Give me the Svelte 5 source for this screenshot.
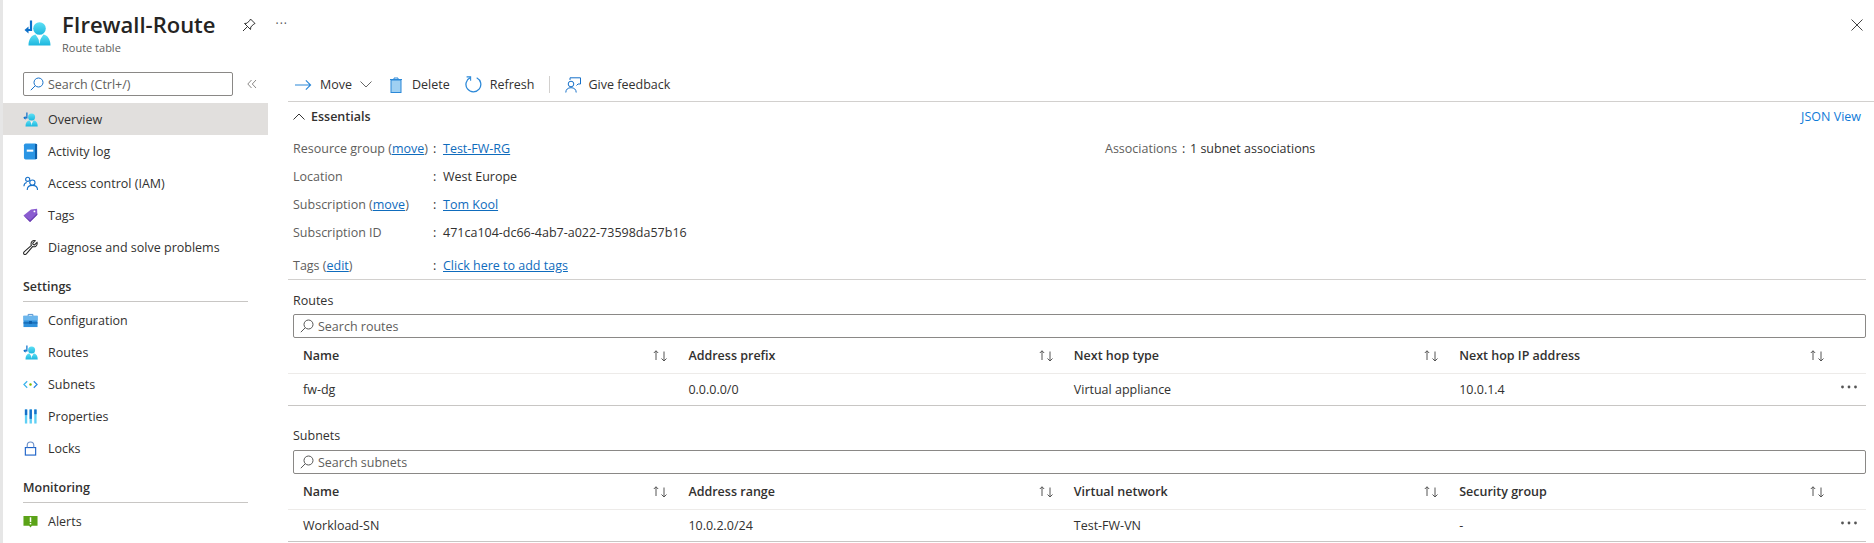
<script>
  const navGroups = [
    { items: [
      { label: 'Overview', icon: 'route', active: true },
      { label: 'Activity log', icon: 'log' },
      { label: 'Access control (IAM)', icon: 'iam' },
      { label: 'Tags', icon: 'tag' },
      { label: 'Diagnose and solve problems', icon: 'wrench' }
    ] },
    { title: 'Settings', items: [
      { label: 'Configuration', icon: 'config' },
      { label: 'Routes', icon: 'route' },
      { label: 'Subnets', icon: 'subnet' },
      { label: 'Properties', icon: 'props' },
      { label: 'Locks', icon: 'lock' }
    ] },
    { title: 'Monitoring', items: [{ label: 'Alerts', icon: 'alert' }] }
  ];

  const tables = [
    { title: 'Routes', search: 'Search routes',
      cols: ['Name', 'Address prefix', 'Next hop type', 'Next hop IP address'],
      row: ['fw-dg', '0.0.0.0/0', 'Virtual appliance', '10.0.1.4'] },
    { title: 'Subnets', search: 'Search subnets',
      cols: ['Name', 'Address range', 'Virtual network', 'Security group'],
      row: ['Workload-SN', '10.0.2.0/24', 'Test-FW-VN', '-'] }
  ];
</script>

{#snippet routeIcon()}
  <svg class="fill" viewBox="0 0 27 26">
    <defs>
      <linearGradient id="cyan" x1="0" y1="0" x2="0" y2="1">
        <stop offset="0" stop-color="#5ee0f5" />
        <stop offset="1" stop-color="#1cb6de" />
      </linearGradient>
    </defs>
    <circle cx="15.5" cy="8.5" r="6.3" fill="url(#cyan)" />
    <path d="M4.5 25.5C4.5 19.5 7 15.5 11.5 14.5L15.5 20.5 19.5 14.5C24 15.5 26.5 19.5 26.5 25.5Z" fill="url(#cyan)" />
    <path d="M13.5 16.5h4l-1 2-.7 5h-.6l-.7-5z" fill="#fff" opacity=".8" />
    <path d="M7 0.5V10H2.5" fill="none" stroke="#0b6fc9" stroke-width="2.2" />
    <path d="M4.5 6.5L.5 10l4 3.5z" fill="#0b6fc9" />
  </svg>
{/snippet}

{#snippet navIcon(name)}
  {#if name === 'route'}
    {@render routeIcon()}
  {:else if name === 'log'}
    <svg class="tall" viewBox="0 0 16 18">
      <rect x="1" y="0.500" width="14" height="17" rx="1.800" fill="#2a95e4" />
      <rect x="12.800" y="1" width="2.200" height="16" fill="#0f5fa8" />
      <rect x="4" y="7" width="7" height="2.200" fill="#fff" />
    </svg>
  {:else if name === 'iam'}
    <svg viewBox="0 0 16 16" fill="none" stroke="#1670c9" stroke-width="1.2">
      <circle cx="5" cy="3.5" r="2.2" />
      <circle cx="10" cy="7" r="2.8" />
      <path d="M1 11c0-2 1-3.500 3-4M4.500 15c0-3 2.200-5 5.500-5s5.500 2 5.500 5" />
    </svg>
  {:else if name === 'tag'}
    <svg viewBox="0 0 16 16">
      <path d="M.5 8L8.500 1.500 15 .8l.3 6.400L7.500 14.800z" fill="#8a5cd0" />
      <path d="M.5 8l7 6.800 7.800-7.600-.2-1.500-7.600 7.300z" fill="#6b3fb0" />
      <circle cx="12.200" cy="3.600" r="1" fill="#fff" />
    </svg>
  {:else if name === 'wrench'}
    <svg viewBox="0 0 16 16" fill="none" stroke="#222" stroke-width="1.100">
      <path d="M15 2.600L12.300 5.200 10.800 4.800 10.400 3.300 13 .8C10.800 0 8.400 1.600 8.600 4.400 8.600 5 8.800 5.400 9 5.800L1.200 12.600C.2 13.600.6 15 1.600 15.400 2.400 15.600 3 15.400 3.600 14.800L10.200 7C12.800 8 15.800 6 15 2.600Z" />
    </svg>
  {:else if name === 'config'}
    <svg viewBox="0 0 16 16">
      <path d="M5.500 3.500V1.500h5v2" fill="none" stroke="#4a8fd0" stroke-width="1" />
      <rect x="0.500" y="3" width="15" height="12" fill="#2e90dc" />
      <rect x="0.500" y="3" width="15" height="5" fill="#6bb6ec" />
      <rect x="0.500" y="10" width="15" height="1.200" fill="#0f5fa8" />
      <rect x="6.500" y="8.500" width="3" height="3" fill="#0f5fa8" />
    </svg>
  {:else if name === 'subnet'}
    <svg viewBox="0 0 16 16" fill="none" stroke-width="1.300">
      <path d="M4.500 4.500L1 8l3.500 3.500" stroke="#3bb4ec" />
      <path d="M11.500 4.500L15 8l-3.500 3.500" stroke="#2a8ae0" />
      <circle cx="8" cy="8" r="1.300" fill="#7fba00" stroke="none" />
    </svg>
  {:else if name === 'props'}
    <svg viewBox="0 0 16 16">
      <rect x="2" y="0.500" width="2.500" height="15" fill="#5fd0f5" />
      <rect x="2" y="0.500" width="2.500" height="6" fill="#1670c9" />
      <rect x="7" y="0.500" width="2.500" height="15" fill="#5fd0f5" />
      <rect x="7" y="0.500" width="2.500" height="10" fill="#1670c9" />
      <rect x="12" y="0.500" width="2.500" height="15" fill="#5fd0f5" />
      <rect x="12" y="0.500" width="2.500" height="5" fill="#1670c9" />
    </svg>
  {:else if name === 'lock'}
    <svg viewBox="0 0 16 16" fill="none" stroke="#1c62c8" stroke-width="1.2">
      <rect x="2.500" y="7" width="11" height="8" />
      <path d="M4.500 7V4.500a3.500 3.500 0 0 1 7 0V7" stroke="#6a8fc8" />
    </svg>
  {:else if name === 'alert'}
    <svg viewBox="0 0 16 16">
      <path d="M0.500 2h15v10.500h-6L8 14.500 6.500 12.500h-6z" fill="#5ba318" />
      <rect x="7.200" y="3.500" width="1.600" height="5" fill="#fff" />
      <rect x="7.200" y="9.500" width="1.600" height="1.600" fill="#fff" />
    </svg>
  {/if}
{/snippet}

{#snippet searchGlyph()}
  <svg class="glass" viewBox="0 0 14 14" fill="none" stroke-width="1">
    <circle cx="8.500" cy="5.500" r="4.500" />
    <path d="M5.300 8.700L.8 13.200" />
  </svg>
{/snippet}

{#snippet sortGlyph()}
  <svg class="sort" viewBox="0 0 16 12" fill="none" stroke="#555" stroke-width="1">
    <path d="M4 10V.8M1.800 3L4 .8 6.200 3M12 1.500v9.500M9.500 8.500L12 11l2.500-2.500" />
  </svg>
{/snippet}

{#snippet dotsGlyph()}
  <svg class="dots-icon" viewBox="0 0 16 4" fill="#555">
    <circle cx="1.500" cy="2" r="1.400" />
    <circle cx="8" cy="2" r="1.400" />
    <circle cx="14.500" cy="2" r="1.400" />
  </svg>
{/snippet}

<div class="blade">
  <header class="title-bar">
    <div class="big-icon">{@render routeIcon()}</div>
    <div class="title-text">
      <h1>FIrewall-Route</h1>
      <div class="subtitle">Route table</div>
    </div>
    <svg class="pin" viewBox="0 0 14 14" fill="none" stroke="#333" stroke-width="1">
      <path d="M8.500 1L13 5.500 11.800 6 8.800 9 8.500 11.500 2.500 5.500 5 5.200 8 2.200zM5.500 8.500L1 13" />
    </svg>
    <span class="more">···</span>
    <svg class="close" viewBox="0 0 12 12" stroke="#444" stroke-width="1">
      <path d="M.5.5l11 11M11.500.5l-11 11" />
    </svg>
  </header>

  <div class="columns">
    <nav class="sidebar">
      <div class="side-search-row">
        <div class="side-search">
          <span class="side-glass">{@render searchGlyph()}</span>
          <span>Search (Ctrl+/)</span>
        </div>
        <svg class="collapse" viewBox="0 0 10 10" fill="none" stroke="#8a8886" stroke-width="1">
          <path d="M4.500 1L.8 5l3.700 4M9 1L5.300 5 9 9" />
        </svg>
      </div>
      {#each navGroups as group}
        {#if group.title}
          <div class="nav-title">{group.title}</div>
        {/if}
        {#each group.items as item}
          <div class="nav-item" class:active={item.active}>
            <span class="nav-icon">{@render navIcon(item.icon)}</span>
            <span>{item.label}</span>
          </div>
        {/each}
      {/each}
    </nav>

    <main class="content">
      <div class="toolbar">
        <span class="tool">
          <svg class="tool-icon arrow" viewBox="0 0 18 12" fill="none" stroke="#2b88d8" stroke-width="1.200">
            <path d="M0 6h16.500M11.500 1l5 5-5 5" />
          </svg>
          Move
          <svg class="chevron" viewBox="0 0 12 7" fill="none" stroke="#666" stroke-width="1">
            <path d="M.5.5L6 6 11.500.5" />
          </svg>
        </span>
        <span class="tool">
          <svg class="tool-icon trash" viewBox="0 0 14 16">
            <path d="M1 2.500h12M5 2.500V1h4v1.500" fill="none" stroke="#2b88d8" />
            <rect x="2" y="3" width="10" height="12.500" fill="#9fd0f2" stroke="#2b88d8" />
          </svg>
          Delete
        </span>
        <span class="tool">
          <svg class="tool-icon refresh" viewBox="0 0 16 16" fill="none" stroke="#2b88d8" stroke-width="1.200">
            <path d="M5 1.500A7 7 0 1 0 11 1.600" />
            <path d="M1.500 .8H5.300V4.500" stroke-width="1" />
          </svg>
          Refresh
        </span>
        <span class="tool-sep"></span>
        <span class="tool">
          <svg class="tool-icon feedback" viewBox="0 0 16 16" fill="none" stroke="#1670c9" stroke-width="1">
            <path d="M5 3V.8h10.500V7H13l-1.500 1.500" />
            <circle cx="6" cy="7" r="2.800" />
            <path d="M.8 15.500c0-3 2-4.800 5.200-4.800s5.200 1.800 5.200 4.800" />
          </svg>
          Give feedback
        </span>
      </div>

      <div class="essentials-head">
        <span class="essentials-title">
          <svg class="chevron-up" viewBox="0 0 12 7" fill="none" stroke="#333" stroke-width="1">
            <path d="M.5 6.500L6 1l5.500 5.500" />
          </svg>
          Essentials
        </span>
        <a class="json" href="#top">JSON View</a>
      </div>

      <div class="essentials">
        <div class="ess-col">
          <div class="kv"><span class="k">Resource group (<a href="#top">move</a>)</span><span class="colon">:</span><a href="#top">Test-FW-RG</a></div>
          <div class="kv"><span class="k">Location</span><span class="colon">:</span><span>West Europe</span></div>
          <div class="kv"><span class="k">Subscription (<a href="#top">move</a>)</span><span class="colon">:</span><a href="#top">Tom Kool</a></div>
          <div class="kv"><span class="k">Subscription ID</span><span class="colon">:</span><span>471ca104-dc66-4ab7-a022-73598da57b16</span></div>
        </div>
        <div class="ess-col">
          <div class="kv assoc"><span class="k">Associations</span><span class="colon">:</span><span>1 subnet associations</span></div>
        </div>
      </div>
      <div class="kv tags-row"><span class="k">Tags (<a href="#top">edit</a>)</span><span class="colon">:</span><a href="#top">Click here to add tags</a></div>

      {#each tables as table}
        <section class="table-block">
          <div class="table-title">{table.title}</div>
          <div class="table-search">
            <span class="table-glass">{@render searchGlyph()}</span>
            <span>{table.search}</span>
          </div>
          <div class="grid-row head">
            {#each table.cols as col}
              <div class="cell">
                <span>{col}</span>
                {@render sortGlyph()}
              </div>
            {/each}
            <div></div>
          </div>
          <div class="grid-row body">
            {#each table.row as value}
              <div class="cell">{value}</div>
            {/each}
            <div class="dots">{@render dotsGlyph()}</div>
          </div>
        </section>
      {/each}
    </main>
  </div>
</div>

<style>
  :global(body) {
    margin: 0;
    background: #fff;
    overflow: hidden;
  }

  .blade {
    width: 1874px;
    height: 543px;
    overflow: hidden;
    font-family: 'Open Sans', 'Noto Sans', sans-serif;
    font-size: 12.5px;
    color: #323130;
    box-sizing: border-box;
    border-left: 3px solid #e6e6e6;
  }

  a {
    color: #0f6cbd;
    text-decoration: underline;
  }

  .title-bar {
    display: flex;
    align-items: flex-start;
    height: 72px;
    position: relative;
  }

  .big-icon {
    width: 27px;
    height: 26px;
    margin: 20px 11px 0 21px;
  }

  .big-icon svg,
  .nav-icon svg {
    display: block;
    width: 100%;
    height: 100%;
  }

  .nav-icon svg.tall {
    height: 17px;
    margin-top: -1px;
  }

  h1 {
    margin: 0;
    padding-top: 9px;
    font-size: 22px;
    line-height: 30px;
    font-weight: 600;
    color: #252423;
  }

  .subtitle {
    font-size: 11px;
    line-height: 14px;
    color: #605e5c;
    margin-top: 2px;
  }

  .pin {
    width: 14px;
    height: 14px;
    margin: 18px 0 0 27px;
  }

  .more {
    margin: 15px 0 0 19px;
    font-size: 12px;
    letter-spacing: 1px;
    color: #555;
  }

  .close {
    width: 12px;
    height: 12px;
    position: absolute;
    right: 11px;
    top: 19px;
  }

  .columns {
    display: flex;
  }

  .sidebar {
    width: 265px;
    flex: none;
  }

  .side-search-row {
    display: flex;
    align-items: center;
    height: 24px;
    padding-left: 20px;
    margin-bottom: 7px;
  }

  .side-search {
    display: flex;
    align-items: center;
    box-sizing: border-box;
    width: 210px;
    height: 24px;
    border: 1px solid #8a8886;
    border-radius: 2px;
    padding-left: 6px;
    color: #605e5c;
  }

  .side-glass {
    stroke: #1670c9;
    display: flex;
    margin-right: 4px;
  }

  .glass {
    width: 14px;
    height: 14px;
  }

  .collapse {
    width: 10px;
    height: 10px;
    margin-left: 14px;
  }

  .nav-item {
    display: flex;
    align-items: center;
    height: 32px;
    padding-left: 20px;
  }

  .nav-item.active {
    background: #e1dfdd;
  }

  .nav-icon {
    width: 15px;
    height: 15px;
    margin-right: 10px;
    display: block;
  }

  .nav-title {
    margin: 15px 20px 2px 20px;
    padding-bottom: 5px;
    border-bottom: 1px solid #c8c6c4;
    font-weight: 600;
    line-height: 18px;
    height: 18px;
  }

  .content {
    flex: 1;
    margin-left: 20px;
    min-width: 0;
  }

  .toolbar {
    display: flex;
    align-items: center;
    box-sizing: border-box;
    height: 30px;
    padding: 0 0 4px 7px;
    border-bottom: 1px solid #d2d0ce;
  }

  .tool {
    display: flex;
    align-items: center;
    margin-right: 15px;
  }

  .tool-icon {
    margin-right: 8px;
    flex: none;
  }

  .arrow {
    width: 17px;
    height: 12px;
  }

  .trash {
    width: 14px;
    height: 16px;
    margin-right: 9px;
  }

  .refresh {
    width: 17px;
    height: 17px;
  }

  .feedback {
    width: 16px;
    height: 16px;
    margin-right: 7px;
  }

  .chevron {
    width: 12px;
    height: 7px;
    margin-left: 8px;
    margin-right: 2px;
  }

  .tool-sep {
    width: 1px;
    height: 17px;
    background: #d2d0ce;
    margin: 0 15px 0 0;
  }

  .essentials-head {
    display: flex;
    justify-content: space-between;
    align-items: center;
    height: 28px;
    padding: 0 13px 0 5px;
  }

  .essentials-title {
    display: flex;
    align-items: center;
    font-weight: 600;
  }

  .chevron-up {
    width: 12px;
    height: 7px;
    margin-right: 6px;
  }

  .json {
    color: #0f7ad8;
    text-decoration: none;
  }

  .essentials {
    display: flex;
    padding-left: 5px;
    padding-top: 4px;
  }

  .ess-col {
    width: 812px;
    flex: none;
  }

  .kv {
    display: flex;
    align-items: center;
    height: 28px;
  }

  .k {
    width: 140px;
    color: #605e5c;
    flex: none;
  }

  .k a {
    color: #0f6cbd;
  }

  .colon {
    width: 10px;
    flex: none;
  }

  .assoc .k {
    width: 77px;
  }

  .assoc .colon {
    width: 8px;
  }

  .tags-row {
    padding-left: 5px;
    margin-top: 5px;
    height: 29px;
    margin-right: 8px;
    border-bottom: 1px solid #d2d0ce;
    box-sizing: border-box;
  }

  .table-block {
    margin-right: 8px;
    padding-left: 5px;
    padding-top: 12px;
  }

  .table-block + .table-block {
    padding-top: 21px;
  }

  .table-title {
    line-height: 18px;
    height: 18px;
    margin-bottom: 4px;
  }

  .table-block + .table-block .table-title {
    margin-bottom: 5px;
  }

  .table-search {
    display: flex;
    align-items: center;
    box-sizing: border-box;
    height: 24px;
    border: 1px solid #8a8886;
    border-radius: 2px;
    padding-left: 6px;
    color: #605e5c;
  }

  .table-glass {
    stroke: #555;
    display: flex;
    margin-right: 4px;
  }

  .grid-row {
    display: grid;
    grid-template-columns: repeat(4, 385.4px) 1fr;
    align-items: center;
    box-sizing: border-box;
    margin-left: -5px;
    padding-left: 5px;
  }

  .head {
    height: 36px;
    border-bottom: 1px solid #edebe9;
  }

  .body {
    height: 32px;
    border-bottom: 1px solid #c8c6c4;
  }

  .head .cell {
    font-weight: 600;
  }

  .cell {
    display: flex;
    justify-content: space-between;
    align-items: center;
    padding: 0 10px;
  }

  .sort {
    width: 16px;
    height: 12px;
  }

  .dots {
    display: flex;
    justify-content: flex-end;
    padding-right: 9px;
    margin-top: -6px;
  }

  .dots-icon {
    width: 16px;
    height: 4px;
  }
</style>
